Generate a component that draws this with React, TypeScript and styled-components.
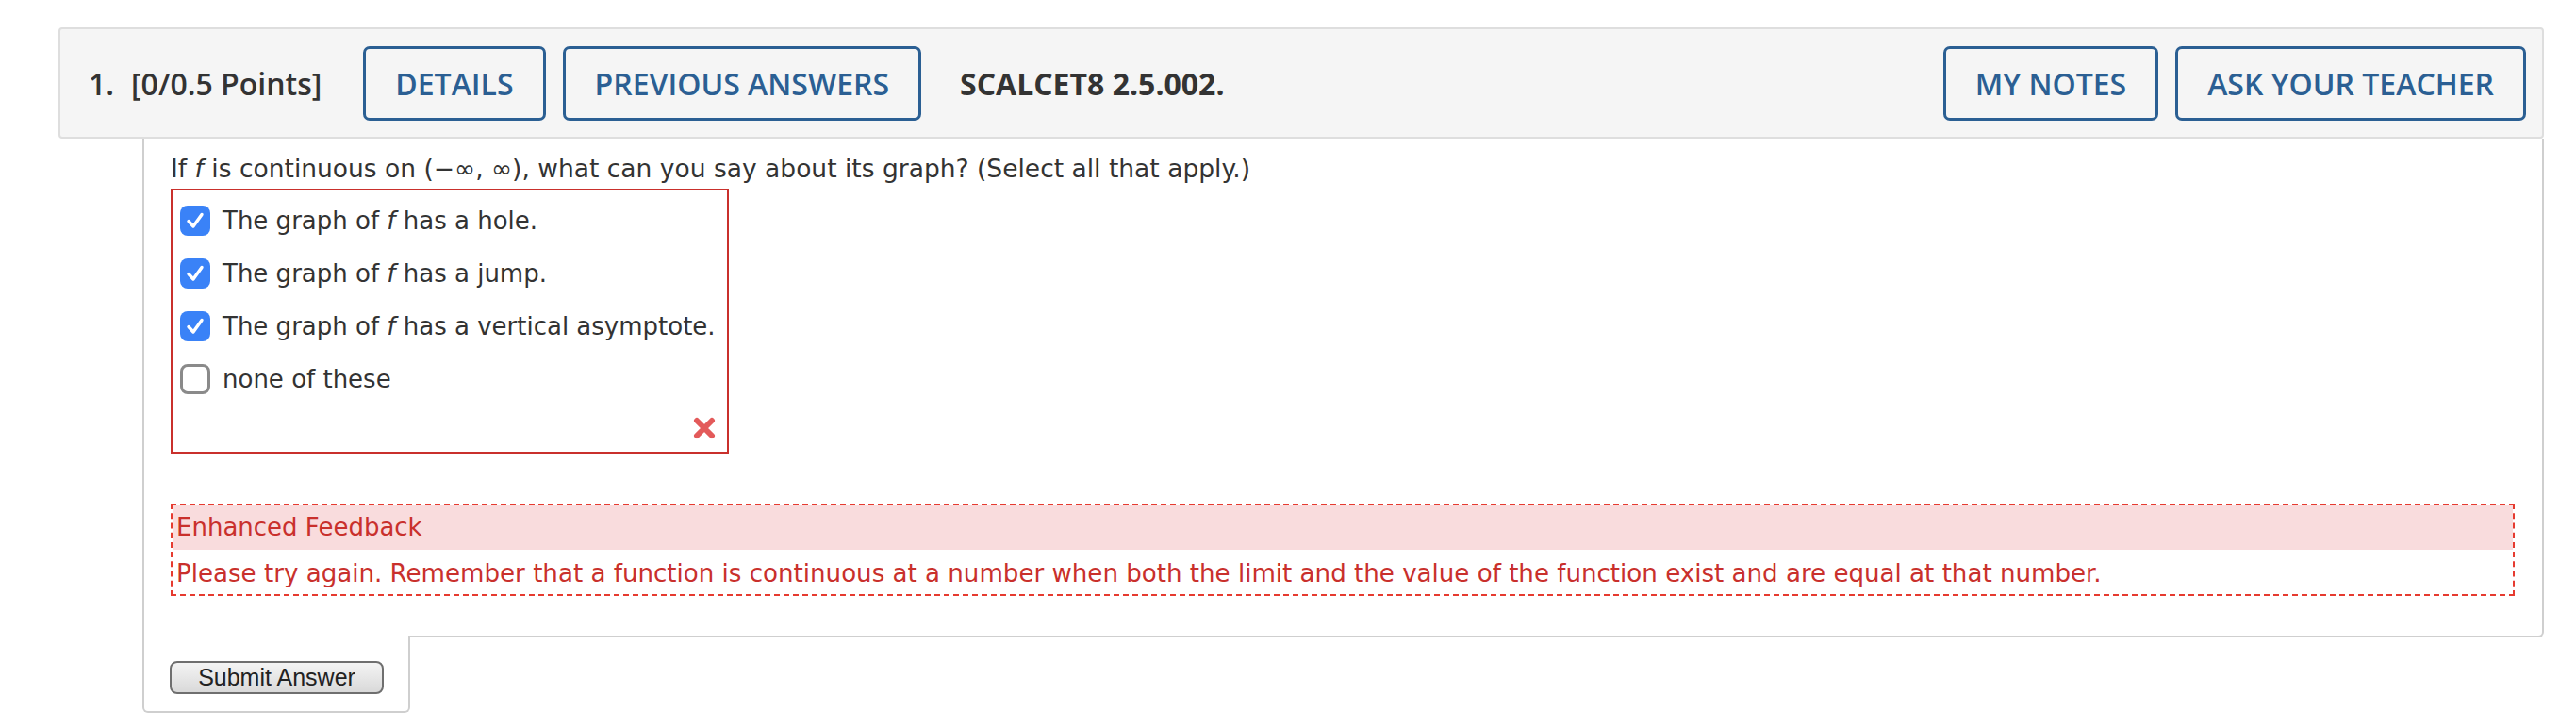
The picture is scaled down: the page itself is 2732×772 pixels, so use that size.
import React from "react";
import styled, { createGlobalStyle } from "styled-components";

const GlobalStyle = createGlobalStyle`
  body {
    margin: 0;
    background: #ffffff;
  }
`;

const Page = styled.div`
  padding: 29px 34px 0 62px;
  font-family: "DejaVu Sans", Verdana, sans-serif;
`;

const Header = styled.div`
  display: flex;
  align-items: center;
  height: 118px;
  box-sizing: border-box;
  padding: 0 17px 0 30px;
  background: #f5f5f5;
  border: 2px solid #dedede;
  border-radius: 4px;
  font-family: "Open Sans", sans-serif;
  font-weight: 600;
  font-size: 32px;
  color: #333333;
`;

const Number = styled.span`
  margin-right: 18px;
`;

const Points = styled.span`
  margin-right: 44px;
`;

const Code = styled.span`
  margin-left: 41px;
  font-weight: 700;
`;

const HeaderButton = styled.button<{ $push?: boolean }>`
  height: 79px;
  box-sizing: border-box;
  padding: 0 31px;
  margin-left: ${(p) => (p.$push ? "auto" : "18px")};
  border: 3px solid #2b5f93;
  border-radius: 7px;
  background: transparent;
  color: #2b5f93;
  font-family: inherit;
  font-weight: 600;
  font-size: 32px;
  &:first-of-type {
    margin-left: 0;
  }
`;

const Body = styled.div`
  margin-left: 89px;
  border: 2px solid #cfcfcf;
  border-top: none;
  border-bottom-right-radius: 6px;
  padding: 14px 29px 42px 28px;
  font-size: 26px;
  color: #333333;
`;

const Question = styled.div`
  line-height: 35px;
  margin-bottom: 4px;
  font-size: 26.5px;
`;

const AnswerBox = styled.div`
  width: 592px;
  box-sizing: border-box;
  border: 2px solid #c9302c;
  padding: 4px 11px 13px 6px;
`;

const Option = styled.label`
  display: flex;
  align-items: center;
  height: 56px;
  gap: 13px;
  padding-left: 2px;
`;

const Box = styled.span<{ $checked: boolean }>`
  display: inline-flex;
  align-items: center;
  justify-content: center;
  width: 32px;
  height: 32px;
  box-sizing: border-box;
  border-radius: 8px;
  background: ${(p) => (p.$checked ? "#3a82f7" : "#ffffff")};
  border: ${(p) => (p.$checked ? "none" : "3px solid #8a8a8a")};
`;

const WrongRow = styled.div`
  display: flex;
  justify-content: flex-end;
  margin-top: 12px;
  height: 24px;
`;

const Feedback = styled.div`
  margin-top: 53px;
  border: 2px dashed #e63b30;
  color: #c9302c;
`;

const FeedbackTitle = styled.div`
  background: #f9dcdd;
  line-height: 47px;
  padding-left: 4px;
`;

const FeedbackText = styled.div`
  line-height: 44px;
  padding: 3px 0 0 4px;
  font-size: 26.1px;
`;

const SubmitTab = styled.div`
  position: relative;
  margin: -2px 0 0 89px;
  width: 284px;
  box-sizing: border-box;
  border: 2px solid #cfcfcf;
  border-top: none;
  border-radius: 0 0 6px 6px;
  background: #ffffff;
  padding: 27px 0 18px 27px;
`;

const SubmitButton = styled.button`
  width: 227px;
  height: 35px;
  box-sizing: border-box;
  border: 2px solid #6f6f6f;
  border-radius: 8px;
  background: linear-gradient(#f4f4f4, #d9d9d9);
  font-family: "Liberation Sans", Arial, sans-serif;
  font-size: 25px;
  color: #222222;
  padding: 0;
  line-height: 29px;
`;

function Check({ checked }: { checked: boolean }) {
  return (
    <Box $checked={checked}>
      {checked && (
        <svg width="22" height="22" viewBox="0 0 22 22">
          <path
            d="M4 11.5 L9 17 L18 4.5"
            fill="none"
            stroke="#ffffff"
            strokeWidth="3.4"
            strokeLinecap="round"
            strokeLinejoin="round"
          />
        </svg>
      )}
    </Box>
  );
}

const options = [
  { pre: "The graph of ", post: " has a hole.", checked: true },
  { pre: "The graph of ", post: " has a jump.", checked: true },
  { pre: "The graph of ", post: " has a vertical asymptote.", checked: true },
  { pre: "none of these", post: "", checked: false },
];

export default function App() {
  return (
    <Page>
      <GlobalStyle />
      <Header>
        <Number>1.</Number>
        <Points>[0/0.5 Points]</Points>
        <HeaderButton>DETAILS</HeaderButton>
        <HeaderButton>PREVIOUS ANSWERS</HeaderButton>
        <Code>SCALCET8 2.5.002.</Code>
        <HeaderButton $push>MY NOTES</HeaderButton>
        <HeaderButton>ASK YOUR TEACHER</HeaderButton>
      </Header>
      <Body>
        <Question>
          If <i>f</i> is continuous on (−∞, ∞), what can you say about its graph? (Select all that apply.)
        </Question>
        <AnswerBox>
          {options.map((o, i) => (
            <Option key={i}>
              <Check checked={o.checked} />
              <span>
                {o.pre}
                {o.post && <i>f</i>}
                {o.post}
              </span>
            </Option>
          ))}
          <WrongRow>
            <svg width="26" height="24" viewBox="0 0 26 24">
              <path
                d="M5 4 L21 20 M21 4 L5 20"
                stroke="#e35a5a"
                strokeWidth="6"
                strokeLinecap="round"
              />
            </svg>
          </WrongRow>
        </AnswerBox>
        <Feedback>
          <FeedbackTitle>Enhanced Feedback</FeedbackTitle>
          <FeedbackText>
            Please try again. Remember that a function is continuous at a number when both the limit and the value of the
            function exist and are equal at that number.
          </FeedbackText>
        </Feedback>
      </Body>
      <SubmitTab>
        <SubmitButton>Submit Answer</SubmitButton>
      </SubmitTab>
    </Page>
  );
}
